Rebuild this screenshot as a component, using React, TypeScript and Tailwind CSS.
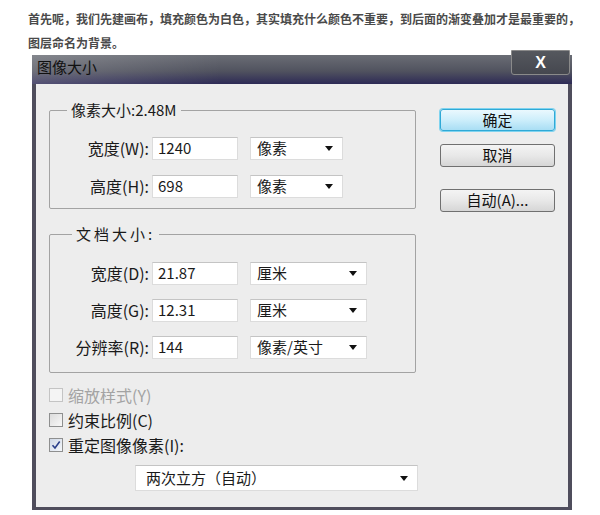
import React from "react";

const cjk = { fontFamily: '"Noto Sans CJK SC", "Noto Sans", sans-serif' };

function Arrow() {
  return (
    <svg width="8" height="5" viewBox="0 0 8 5" className="shrink-0">
      <polygon points="0,0 8,0 4,5" fill="#111" />
    </svg>
  );
}

function Field({ label, value, unit, unitW }: { label: string; value: string; unit: string; unitW: string }) {
  return (
    <div className="flex items-center h-[23px]">
      <div className="w-[100px] text-right text-[16px] leading-[23px] text-[#1a1a1a] pr-[1px]">{label}</div>
      <div className="ml-[2px] w-[86px] h-[23px] bg-white border border-[#dcdcdc] border-t-[#c4c4c4] flex items-center pl-[5px] text-[15px] text-[#1a1a1a]">
        {value}
      </div>
      <div
        className={`ml-[12px] ${unitW} h-[23px] bg-white border border-[#dcdcdc] border-t-[#c4c4c4] flex items-center justify-between pl-[6px] pr-[9px] text-[15px] text-[#1a1a1a]`}
      >
        <span>{unit}</span>
        <Arrow />
      </div>
    </div>
  );
}

function Check({ label, checked, disabled }: { label: string; checked?: boolean; disabled?: boolean }) {
  return (
    <div className="flex items-center h-[25px]">
      <div
        className={`w-[14px] h-[14px] border ${disabled ? "border-[#c4c4c4] bg-[#f4f4f4]" : checked ? "border-[#8e8f8f] bg-[linear-gradient(135deg,#cfd8e6,#f4f7fb)]" : "border-[#8e8f8f] bg-[linear-gradient(135deg,#dcdcdc,#f8f8f8)]"} flex items-center justify-center`}
      >
        {checked && (
          <svg width="10" height="10" viewBox="0 0 10 10">
            <path d="M1.5 5.2 L4 8 L8.7 1.5" fill="none" stroke="#2a3f8a" strokeWidth="1.6" />
          </svg>
        )}
      </div>
      <span className={`ml-[5px] text-[16px] ${disabled ? "text-[#a3a3a3]" : "text-[#1a1a1a]"}`}>{label}</span>
    </div>
  );
}

export default function App() {
  return (
    <div className="w-[600px] h-[515px] bg-white overflow-hidden" style={cjk}>
      <div className="pl-[28px] pt-[7px] text-[12px] leading-[24px] font-bold text-[#4a4a4a] whitespace-nowrap">
        <div>首先呢，我们先建画布，填充颜色为白色，其实填充什么颜色不重要，到后面的渐变叠加才是最重要的，</div>
        <div>图层命名为背景。</div>
      </div>
      <div className="ml-[32px] w-[540px] h-[455px] flex flex-col bg-[#4f4d5c]">
        <div className="h-[29px] shrink-0 flex items-start justify-between bg-[linear-gradient(90deg,rgba(255,255,255,0.18),rgba(255,255,255,0)_35%),linear-gradient(180deg,#6a6d75_0%,#51535f_55%,#2d2a56_100%)]">
          <div className="pl-[5px] pt-[2px] text-[15px] leading-[20px] text-[#101010]">图像大小</div>
          <div className="mr-[2px] -mt-[5px] w-[59px] h-[25px] rounded-b-[3px] border border-[#8a8a8a] bg-[linear-gradient(180deg,#55585e,#45474f)] flex items-center justify-center">
            <span className="text-white font-bold text-[16px] leading-none" style={{ fontFamily: '"Liberation Sans", sans-serif' }}>
              X
            </span>
          </div>
        </div>
        <div className="flex-1 mx-[4px] mb-[3px] bg-[#ededed] flex">
          <div className="pl-[13px] pt-[16px] w-[380px] shrink-0">
            <fieldset className="w-[367px] border border-[#a3a3a3] rounded-[2px] px-0 pt-[17px] pb-[10px] flex flex-col gap-[15px]">
              <legend className="ml-[17px] px-[4px] text-[15px] leading-[20px] text-[#1a1a1a]">像素大小:2.48M</legend>
              <Field label="宽度(W):" value="1240" unit="像素" unitW="w-[93px]" />
              <Field label="高度(H):" value="698" unit="像素" unitW="w-[93px]" />
            </fieldset>
            <fieldset className="mt-[15px] w-[367px] border border-[#a3a3a3] rounded-[2px] px-0 pt-[18px] pb-[13px] flex flex-col gap-[14px]">
              <legend className="ml-[22px] px-[4px] text-[15px] leading-[20px] tracking-[3px] text-[#1a1a1a]">文档大小:</legend>
              <Field label="宽度(D):" value="21.87" unit="厘米" unitW="w-[117px]" />
              <Field label="高度(G):" value="12.31" unit="厘米" unitW="w-[117px]" />
              <Field label="分辨率(R):" value="144" unit="像素/英寸" unitW="w-[117px]" />
            </fieldset>
            <div className="mt-[9px] flex flex-col">
              <Check label="缩放样式(Y)" disabled />
              <Check label="约束比例(C)" />
              <Check label="重定图像像素(I):" checked />
            </div>
            <div className="mt-[8px] ml-[86px] w-[283px] h-[26px] bg-white border border-[#dcdcdc] border-t-[#c4c4c4] flex items-center justify-between pl-[10px] pr-[9px] text-[15px] text-[#1a1a1a]">
              <span>两次立方（自动）</span>
              <Arrow />
            </div>
          </div>
          <div className="ml-[24px] pt-[25px] w-[115px] flex flex-col">
            <div className="h-[22px] rounded-[3px] border border-[#2fa9d6] shadow-[0_0_0_1px_#7fd3ef] bg-[linear-gradient(180deg,#eaf8fe_0%,#cdeefb_50%,#a9def4_100%)] flex items-center justify-center text-[15px] text-[#111]">
              确定
            </div>
            <div className="mt-[13px] h-[23px] rounded-[3px] border border-[#707070] bg-[linear-gradient(180deg,#f4f4f4_0%,#e8e8e8_50%,#d6d6d6_100%)] flex items-center justify-center text-[15px] text-[#111]">
              取消
            </div>
            <div className="mt-[22px] h-[23px] rounded-[3px] border border-[#707070] bg-[linear-gradient(180deg,#f4f4f4_0%,#e8e8e8_50%,#d6d6d6_100%)] flex items-center justify-center text-[15px] text-[#111]">
              自动(A)...
            </div>
          </div>
        </div>
      </div>
    </div>
  );
}
